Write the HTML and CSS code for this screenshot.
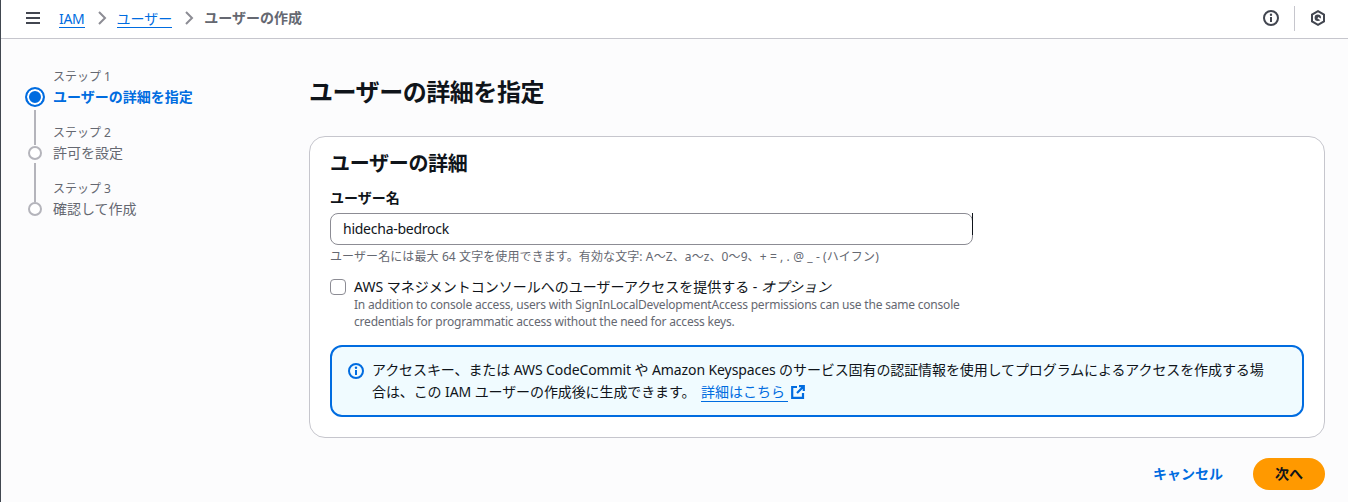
FILE: index.html
```html
<!DOCTYPE html>
<html lang="ja">
<head>
<meta charset="utf-8">
<title>ユーザーの作成</title>
<link rel="stylesheet" href="styles.css">
</head>
<body>
<header class="topbar">
  <svg class="menu" width="16" height="14" viewBox="0 0 16 14"><path d="M1 2h14M1 7h14M1 12h14" stroke="#424650" stroke-width="2" fill="none"/></svg>
  <nav class="crumbs">
    <a class="crumb-link crumb-latin">IAM</a>
    <svg class="chev" width="16" height="16" viewBox="0 0 16 16"><path d="M5 2l6 6-6 6" stroke="#8c8c94" stroke-width="2" fill="none"/></svg>
    <a class="crumb-link">ユーザー</a>
    <svg class="chev" width="16" height="16" viewBox="0 0 16 16"><path d="M5 2l6 6-6 6" stroke="#8c8c94" stroke-width="2" fill="none"/></svg>
    <span class="crumb-current">ユーザーの作成</span>
  </nav>
  <div class="top-tools">
    <svg width="16" height="16" viewBox="0 0 16 16"><circle cx="8" cy="8" r="7" stroke="#424650" stroke-width="2" fill="none"/><path d="M8 7v5" stroke="#424650" stroke-width="2"/><circle cx="8" cy="4.7" r="1.2" fill="#424650"/></svg>
    <span class="tool-sep"></span>
    <svg width="16" height="16" viewBox="0 0 16 16"><path d="M8 1.2l6 3.4v6.8l-6 3.4-6-3.4V4.6z" stroke="#424650" stroke-width="2" fill="none"/><circle cx="7.8" cy="7.8" r="3.2" fill="#424650"/><path d="M7.8 7.8l4 2.2" stroke="#fff" stroke-width="1.6"/></svg>
  </div>
</header>
<main class="page">
  <ol class="steps">
    <li class="step step-active">
      <span class="step-num">ステップ 1</span>
      <div class="step-row"><span class="dot dot-active"></span><span class="step-name">ユーザーの詳細を指定</span></div>
    </li>
    <li class="step step-line">
      <span class="step-num">ステップ 2</span>
      <div class="step-row"><span class="dot"></span><span class="step-name">許可を設定</span></div>
    </li>
    <li class="step step-line">
      <span class="step-num">ステップ 3</span>
      <div class="step-row"><span class="dot"></span><span class="step-name">確認して作成</span></div>
    </li>
  </ol>
  <section class="content">
    <h1 class="title">ユーザーの詳細を指定</h1>
    <div class="card">
      <h2 class="card-title">ユーザーの詳細</h2>
      <label class="field-label">ユーザー名</label>
      <div class="input">hidecha-bedrock</div>
      <p class="hint">ユーザー名には最大 64 文字を使用できます。有効な文字: A〜Z、a〜z、0〜9、+ = , . @ _ - (ハイフン)</p>
      <div class="check-row">
        <span class="checkbox"></span>
        <div>
          <div class="check-label">AWS マネジメントコンソールへのユーザーアクセスを提供する - <em>オプション</em></div>
          <div class="check-desc">In addition to console access, users with SignInLocalDevelopmentAccess permissions can use the same console<br>credentials for programmatic access without the need for access keys.</div>
        </div>
      </div>
      <div class="alert">
        <svg class="alert-icon" width="16" height="16" viewBox="0 0 16 16"><circle cx="8" cy="8" r="7" stroke="#006ce0" stroke-width="2" fill="none"/><path d="M8 7v5" stroke="#006ce0" stroke-width="2"/><circle cx="8" cy="4.7" r="1.2" fill="#006ce0"/></svg>
        <p class="alert-text">アクセスキー、または AWS CodeCommit や Amazon Keyspaces のサービス固有の認証情報を使用してプログラムによるアクセスを作成する場合は、この IAM ユーザーの作成後に生成できます。 <a class="ext-link">詳細はこちら</a><svg class="ext" width="14" height="14" viewBox="0 0 14 14"><path d="M6 2H1.2v10.8H12V8" stroke="#006ce0" stroke-width="2.2" fill="none"/><path d="M8 1.2h4.8V6M12.5 1.5L6 8" stroke="#006ce0" stroke-width="2.2" fill="none"/></svg></p>
      </div>
    </div>
    <div class="actions">
      <a class="cancel">キャンセル</a>
      <button class="next">次へ</button>
    </div>
  </section>
</main>
</body>
</html>
```
FILE: styles.css
```css
* { box-sizing: border-box; }
html, body { margin: 0; height: 100%; }
body {
  background: #fcfcfd;
  color: #0f141a;
  font-family: "Noto Sans", "Noto Sans CJK JP", sans-serif;
  font-size: 14px;
  line-height: 20px;
  overflow: hidden;
  border-left: 1px solid #414750;
}
.topbar {
  height: 39px;
  background: #fff;
  border-bottom: 1px solid #c6c6cd;
  display: flex;
  align-items: center;
  padding: 0 22px 2px 24px;
}
.menu { flex: none; margin-right: 18px; }
.crumbs { display: flex; align-items: center; gap: 7px; }
.crumb-link { color: #006ce0; border-bottom: 1px solid #006ce0; line-height: 17px; margin-top: 2px; }
.crumb-latin { letter-spacing: -0.3px; }
.chev { flex: none; margin-left: 2px; }
.crumb-current { color: #656871; font-weight: 700; }
.top-tools { margin-left: auto; display: flex; align-items: center; gap: 15px; }
.tool-sep { width: 1px; height: 25px; background: #c6c6cd; }
.page { display: flex; }
.steps {
  list-style: none;
  margin: 0;
  padding: 30px 0 0 24px;
  width: 308px;
  flex: none;
}
.step { position: relative; height: 56px; }
.step-num { display: block; font-size: 12px; line-height: 16px; margin-bottom: 1px; color: #656871; padding-left: 28px; }
.step-row { display: flex; align-items: center; gap: 10px; height: 22px; }
.step-name { color: #656871; }
.step-active .step-name { color: #006ce0; font-weight: 700; }
.step-line::before {
  content: "";
  position: absolute;
  left: 9px;
  top: -15px;
  width: 2px;
  height: 35px;
  background: #b4b4bb;
}
.step-line:last-child::before { top: -18px; height: 39px; }
.dot {
  flex: none;
  width: 14px;
  height: 14px;
  margin: 0 1px 0 3px;
  border: 2px solid #b4b4bb;
  border-radius: 50%;
  background: #fff;
}
.dot-active {
  width: 20px;
  height: 20px;
  margin: 0 -2px 0 0;
  border-color: #006ce0;
  background: #006ce0;
  box-shadow: inset 0 0 0 2px #fff;
}
.content { width: 1016px; padding-top: 38px; }
.title { margin: 0; font-size: 24px; line-height: 30px; font-weight: 700; letter-spacing: -0.45px; }
.card {
  margin-top: 29px;
  height: 302px;
  background: #fff;
  border: 1px solid #c6c6cd;
  border-radius: 16px;
  padding: 14px 20px 0;
}
.card-title { margin: 0; font-size: 20px; line-height: 26px; font-weight: 700; letter-spacing: -0.3px; }
.field-label { display: block; margin-top: 11px; font-weight: 700; line-height: 20px; }
.input {
  position: relative;
  margin-top: 5px;
  width: 643px;
  height: 32px;
  border: 1px solid #8c8c94;
  border-radius: 8px;
  padding: 5px 12px;
  background: #fff;
  letter-spacing: -0.25px;
}
.input::after {
  content: "";
  position: absolute;
  right: -1px;
  top: -1px;
  width: 1px;
  height: 22px;
  background: #0f141a;
}
.hint { margin: 4px 0 0; font-size: 12px; line-height: 16px; color: #656871; letter-spacing: 0.1px; }
.check-row { display: flex; gap: 8px; margin-top: 12px; }
.checkbox { flex: none; width: 16px; height: 16px; margin-top: 2px; border: 1px solid #8c8c94; border-radius: 4px; background: #fff; }
.check-label { line-height: 20px; }
.check-desc { font-size: 12px; line-height: 17px; margin-top: -1px; color: #656871; letter-spacing: -0.2px; }
.alert {
  margin-top: 15px;
  display: flex;
  gap: 8px;
  width: 974px;
  height: 72px;
  background: #f0fbff;
  border: 2px solid #006ce0;
  border-radius: 12px;
  padding: 12px 30px 12px 16px;
}
.alert-icon { flex: none; margin-top: 4px; }
.alert-text { margin: 0; line-height: 22px; letter-spacing: -0.1px; }
.ext-link { color: #006ce0; border-bottom: 1px solid #006ce0; margin-left: 2px; padding-right: 3px; letter-spacing: 0; }
.ext { vertical-align: -2px; margin-left: 3px; }
.actions { display: flex; justify-content: flex-end; align-items: center; gap: 30px; margin-top: 20px; }
.cancel { color: #006ce0; font-weight: 700; }
.next {
  width: 72px;
  height: 32px;
  border: 0;
  border-radius: 16px;
  background: #ff9900;
  color: #0f141a;
  font: 700 14px/20px "Noto Sans", "Noto Sans CJK JP", sans-serif;
}
```
